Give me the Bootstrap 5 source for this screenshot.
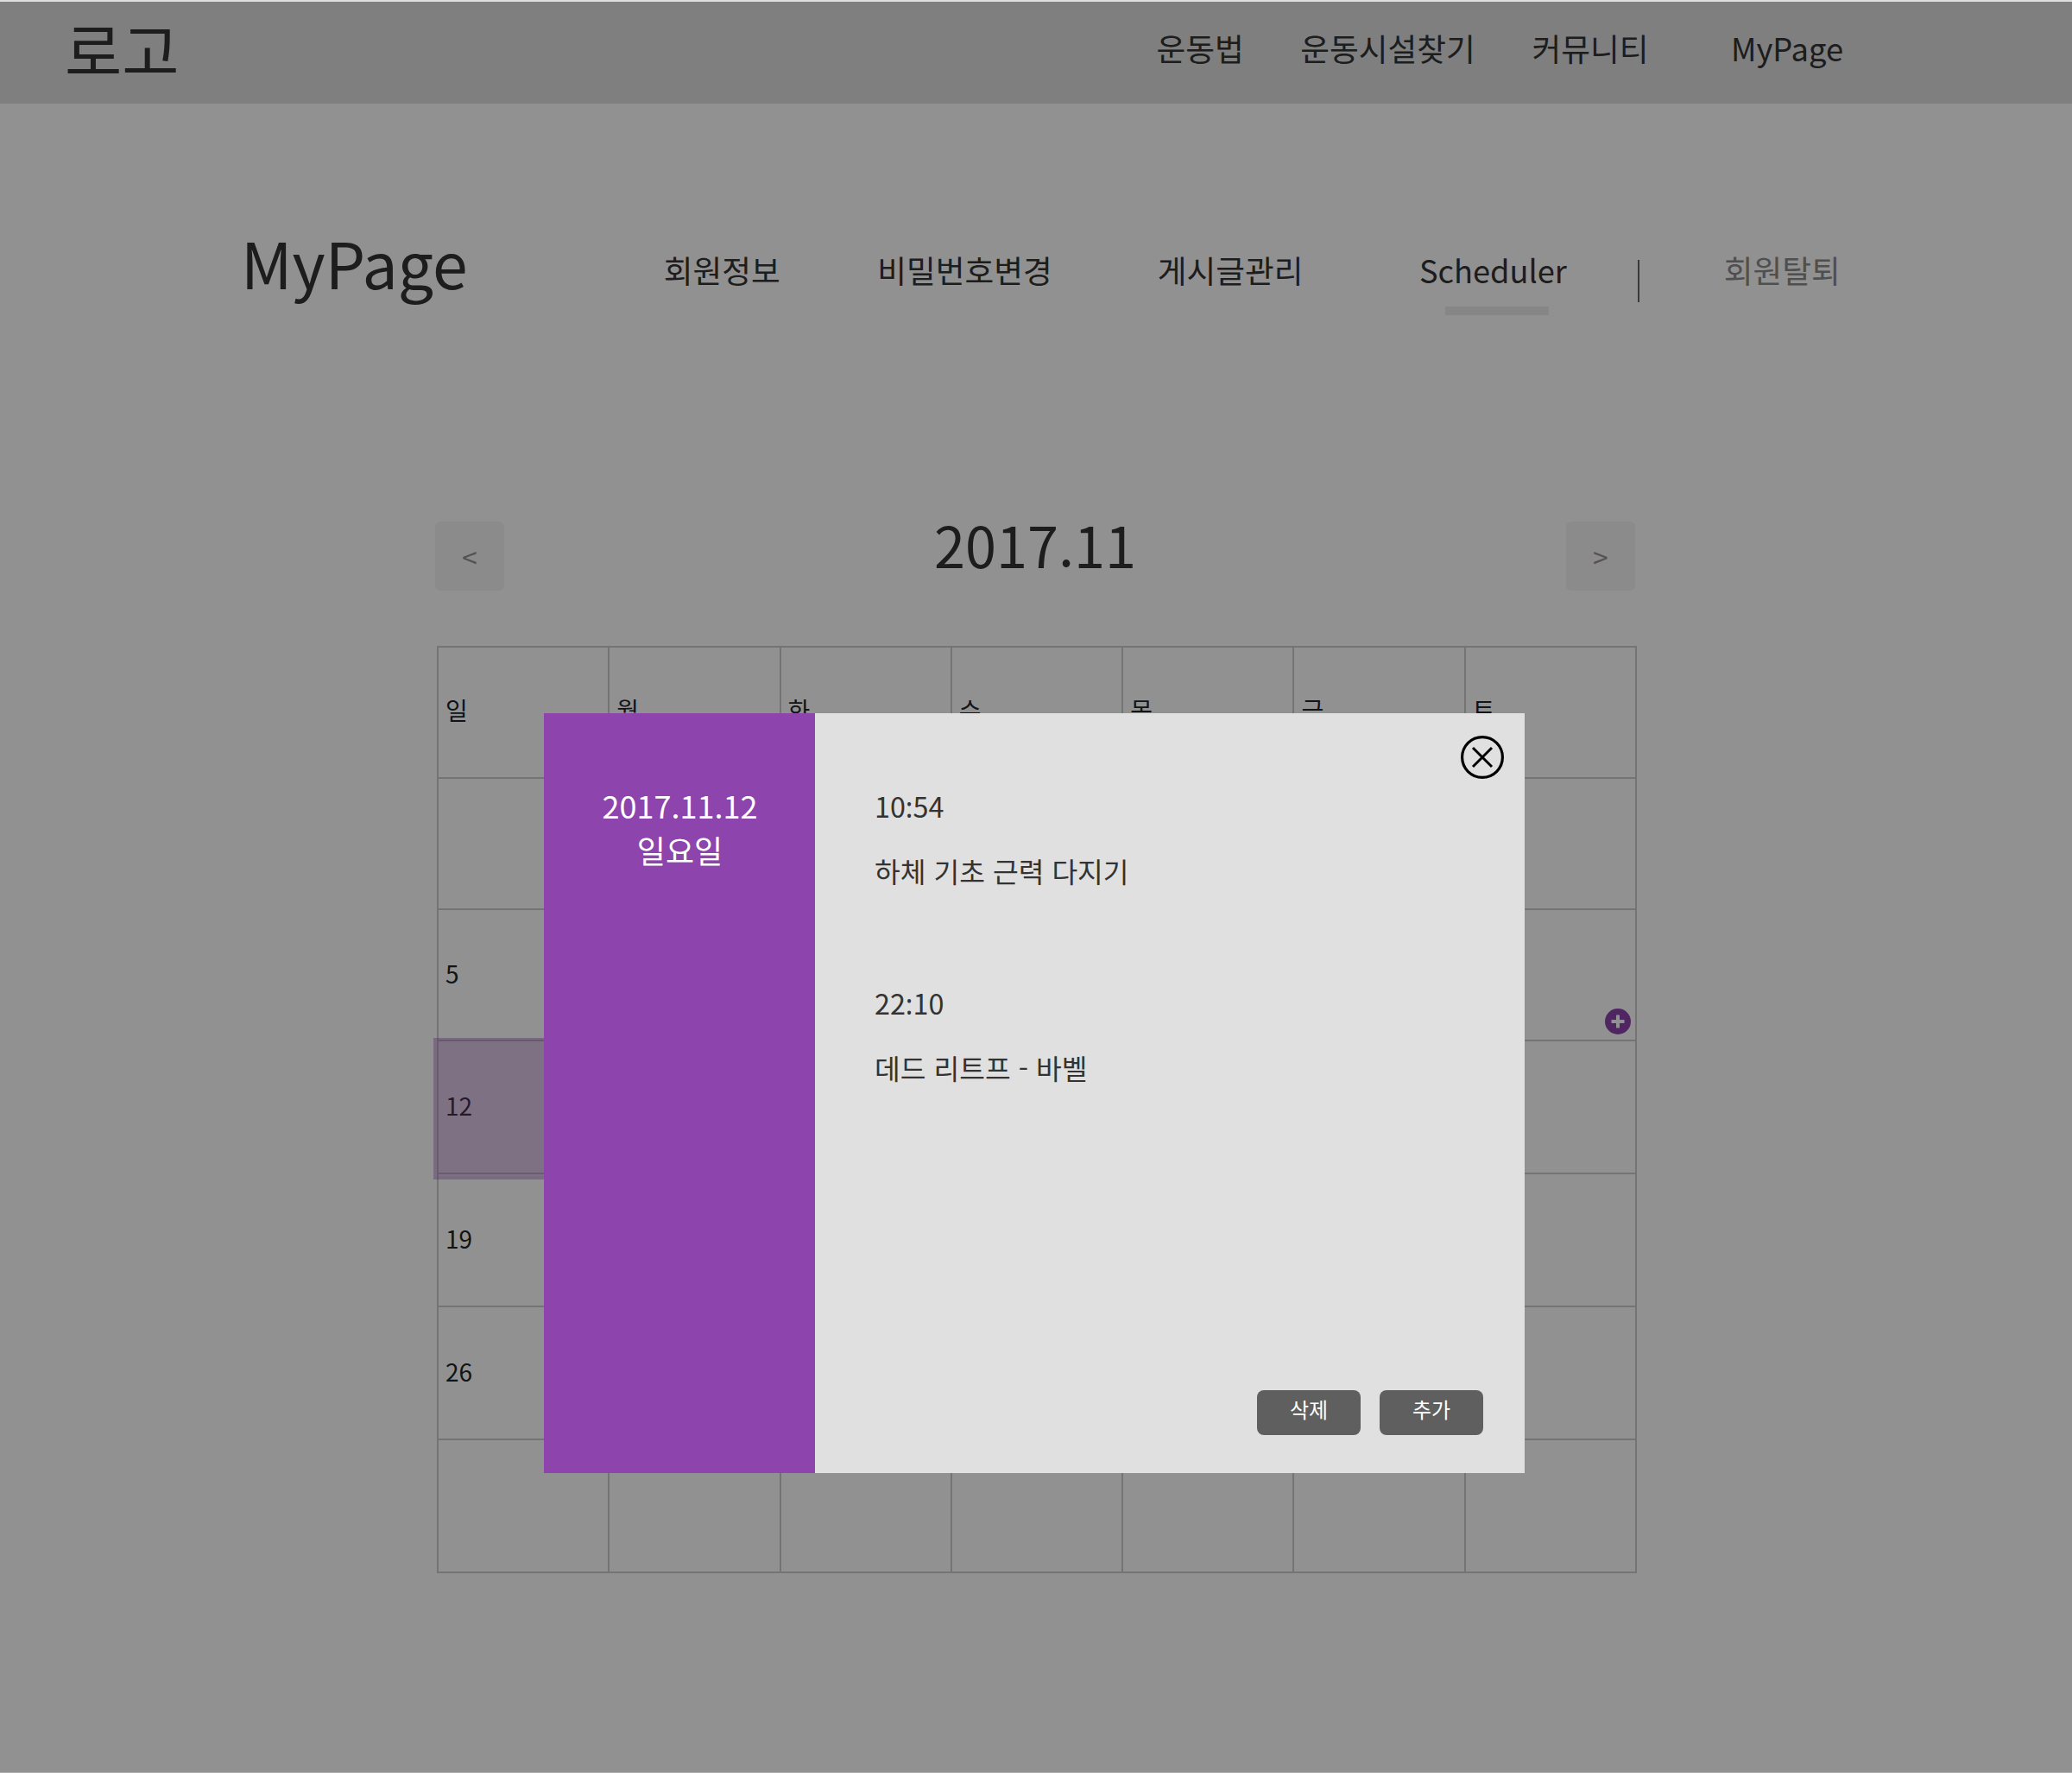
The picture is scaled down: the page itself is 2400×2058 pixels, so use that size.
<!DOCTYPE html>
<html lang="ko">
<head>
    <meta charset="UTF-8">
    <meta name="viewport" content="width=device-width, initial-scale=1">
    <title>MyPage - Scheduler</title>
    <link href="https://cdn.jsdelivr.net/npm/bootstrap@5.3.3/dist/css/bootstrap.min.css" rel="stylesheet">
    <style>
        html, body { height: 2058px; overflow: hidden; }
        body { background: #fff; color: #333; font-family: "Noto Sans CJK KR", "Noto Sans", sans-serif; position: relative; }
        a { color: inherit; text-decoration: none; }

        .top-bar { height: 120px; background: #dfdfdf; padding: 0 0 9px 75px; }
        .top-logo { font-size: 72px; line-height: 1; }
        .top-menu { margin: 0 265px 0 auto; padding: 0; font-size: 36.7px; gap: 65.5px; }
        .top-menu li:last-child { margin-left: 30px; font-size: 36.3px; }

        .sub-head { margin: 149px 0 0 279px; height: 96px; }
        .sub-title { font-size: 73.3px; line-height: 1; margin: 0 0 27px; font-weight: 400; }
        .sub-menu { font-size: 36.7px; line-height: 1.5; }
        .sub-menu li { position: relative; }
        .sub-menu li:nth-child(1) { margin-left: 227px; }
        .sub-menu li:nth-child(2) { margin-left: 112.5px; }
        .sub-menu li:nth-child(3) { margin-left: 122px; }
        .sub-menu li:nth-child(4) { margin-left: 134.5px; font-size: 36.2px; }
        .sub-menu li:nth-child(5) { margin-left: 82.5px; }
        .sub-menu li:nth-child(6) { margin-left: 97.5px; color: #8b8b8b; }
        .sub-active::after { content: ""; position: absolute; left: 30px; bottom: -15px; width: 120px; height: 10px; background: #ebebeb; }
        .sub-sep { display: block; width: 2px; height: 49px; background: #666; margin-top: 16px; }

        .month-bar { width: 1390px; margin: 239px 0 0 504px; height: 80px; }
        .month-title { font-size: 64.8px; line-height: 1; margin: 0 0 28px; font-weight: 400; }
        .month-btn { width: 80px; height: 80px; padding: 0; background: #f5f5f5; border: 0; border-radius: 6px; color: #959595; font-size: 32px; }

        .cal-wrap { width: 1390px; margin: 64px 0 0 506px; }
        .cal-table { table-layout: fixed; margin: 0; --bs-border-color: #ccc; --bs-border-width: 2px; --bs-table-bg: transparent; font-size: 28px; }
        .cal-table th, .cal-table td { padding: 0 0 4px 8px; vertical-align: middle; font-weight: 400; height: 152px; position: relative; }
        .cal-table th { padding-bottom: 6px; }
        .cal-table tbody tr:nth-child(n+3) td { height: 154px; }
        .cal-pick { position: absolute; left: -6px; top: -4px; right: -2px; bottom: -8px; background: rgba(142, 68, 173, .3); border: 4px solid rgba(142, 68, 173, .08); }
        .cal-add { position: absolute; right: 5px; bottom: 6px; width: 30px; height: 30px; display: block; }

        .dim-layer { position: absolute; left: 0; top: 2px; width: 100%; height: 2051px; background: rgba(0, 0, 0, .43); }
        .day-modal { position: absolute; left: 630px; top: 824px; width: 1136px; height: 880px; background: #e0e0e0; }
        .day-side { width: 314px; background: #8e44ad; color: #fff; font-size: 36px; line-height: 52px; padding: 80px 0 0 1px; }
        .day-main { padding: 83px 48px 44px 69px; font-size: 32.3px; position: relative; }
        .day-close { position: absolute; top: 22px; right: 24px; width: 50px; height: 50px; padding: 0; border: 0; background: none; display: block; }
        .day-entry { margin-bottom: 78px; }
        .day-entry p { margin: 0 0 27px; line-height: 48px; }
        /* CJK font lifts the colon between digits, reference has it on the baseline */
        .time-colon { font-family: "Noto Sans", sans-serif; line-height: 0; }
        .day-actions { gap: 22px; }
        .day-btn { width: 120px; height: 52px; padding: 0 0 8px; border: 0; border-radius: 8px; background: #5f5f5f; color: #fff; font-size: 24px; }
    </style>
</head>
<body>
<header class="top-bar d-flex align-items-center">
    <a class="top-logo" href="#">로고</a>
    <ul class="top-menu list-unstyled d-flex">
        <li><a href="#">운동법</a></li>
        <li><a href="#">운동시설찾기</a></li>
        <li><a href="#">커뮤니티</a></li>
        <li><a href="#">MyPage</a></li>
    </ul>
</header>

<div class="sub-head d-flex align-items-center">
    <h1 class="sub-title">MyPage</h1>
    <ul class="sub-menu list-unstyled d-flex m-0">
        <li><a href="#">회원정보</a></li>
        <li><a href="#">비밀번호변경</a></li>
        <li><a href="#">게시글관리</a></li>
        <li class="sub-active"><a href="#">Scheduler</a></li>
        <li><span class="sub-sep"></span></li>
        <li><a href="#">회원탈퇴</a></li>
    </ul>
</div>

<div class="month-bar d-flex justify-content-between align-items-center">
    <button class="btn month-btn" type="button">&lt;</button>
    <h2 class="month-title">2017.11</h2>
    <button class="btn month-btn" type="button">&gt;</button>
</div>

<div class="cal-wrap">
    <table class="table table-bordered cal-table">
        <thead>
            <tr><th>일</th><th>월</th><th>화</th><th>수</th><th>목</th><th>금</th><th>토</th></tr>
        </thead>
        <tbody>
            <tr><td></td><td></td><td></td><td>1</td><td>2</td><td>3</td><td>4</td></tr>
            <tr><td>5</td><td>6</td><td>7</td><td>8</td><td>9</td><td>10</td>
                <td>11
                    <svg class="cal-add" viewBox="0 0 30 30"><circle cx="15" cy="15" r="15" fill="#8e44ad"/><path d="M15 7.5v15M7.5 15h15" stroke="#fff" stroke-width="4"/></svg>
                </td></tr>
            <tr><td>12<span class="cal-pick"></span></td><td>13</td><td>14</td><td>15</td><td>16</td><td>17</td><td>18</td></tr>
            <tr><td>19</td><td>20</td><td>21</td><td>22</td><td>23</td><td>24</td><td>25</td></tr>
            <tr><td>26</td><td>27</td><td>28</td><td>29</td><td>30</td><td></td><td></td></tr>
            <tr><td></td><td></td><td></td><td></td><td></td><td></td><td></td></tr>
        </tbody>
    </table>
</div>

<div class="dim-layer">
    <div class="day-modal d-flex">
        <aside class="day-side text-center">2017.11.12<br>일요일</aside>
        <section class="day-main flex-grow-1 d-flex flex-column">
            <button class="day-close" type="button" aria-label="닫기">
                <svg width="50" height="50" viewBox="0 0 50 50"><circle cx="25" cy="25" r="23.4" fill="none" stroke="#000" stroke-width="3.2"/><path d="M14 14l22 22M36 14L14 36" stroke="#000" stroke-width="3"/></svg>
            </button>
            <div class="day-entry">
                <p>10<span class="time-colon">:</span>54</p>
                <p>하체 기초 근력 다지기</p>
            </div>
            <div class="day-entry">
                <p>22<span class="time-colon">:</span>10</p>
                <p>데드 리트프 - 바벨</p>
            </div>
            <div class="day-actions mt-auto d-flex justify-content-end">
                <button class="btn day-btn" type="button">삭제</button>
                <button class="btn day-btn" type="button">추가</button>
            </div>
        </section>
    </div>
</div>

<script src="https://cdn.jsdelivr.net/npm/bootstrap@5.3.3/dist/js/bootstrap.bundle.min.js"></script>
</body>
</html>
